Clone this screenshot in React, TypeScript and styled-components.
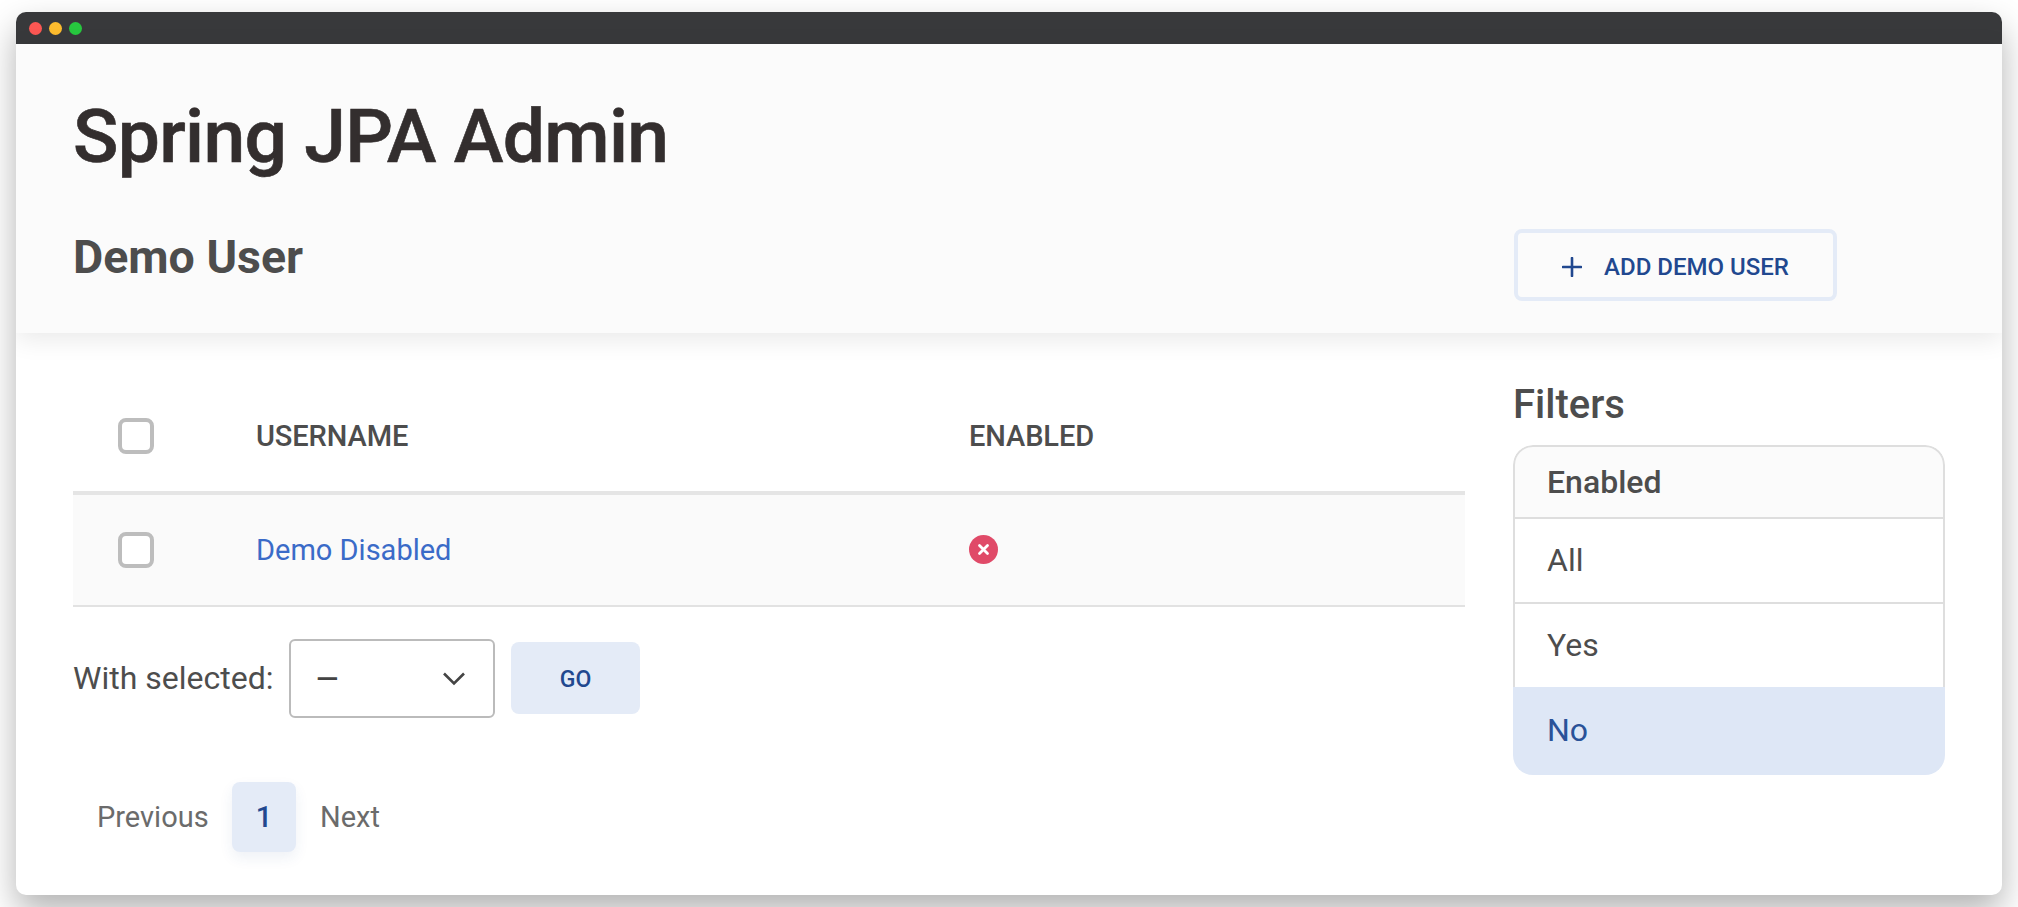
import styled, { createGlobalStyle } from "styled-components";

const GlobalStyle = createGlobalStyle`
  html, body {
    margin: 0;
    padding: 0;
    height: 100%;
    background: #ffffff;
    overflow: hidden;
  }
  * {
    box-sizing: border-box;
  }
`;

const Page = styled.div`
  padding: 12px 16px 0;
  height: 907px;
  font-family: Roboto, "Liberation Sans", sans-serif;
  color: #4d4d4d;
`;

const Window = styled.div`
  height: 883px;
  display: flex;
  flex-direction: column;
  background: #ffffff;
  border-radius: 10px;
  overflow: hidden;
  box-shadow: 0 16px 34px rgba(0, 0, 0, 0.3);
`;

const TitleBar = styled.div`
  flex: none;
  height: 32px;
  padding-left: 13px;
  display: flex;
  align-items: center;
  gap: 7px;
  background: #38393b;
`;

const Dot = styled.span<{ $color: string }>`
  width: 13px;
  height: 13px;
  border-radius: 50%;
  background: ${({ $color }) => $color};
`;

const Header = styled.header`
  flex: none;
  height: 289px;
  padding: 0 57px;
  background: #fbfbfb;
  box-shadow: 0 6px 24px rgba(0, 0, 0, 0.09);
  position: relative;
`;

const Title = styled.h1`
  margin: 0;
  padding-top: 41px;
  font-size: 75px;
  line-height: 102px;
  letter-spacing: -0.7px;
  font-weight: 500;
  -webkit-text-stroke: 0.6px #332e2e;
  color: #332e2e;
`;

const HeaderRow = styled.div`
  display: flex;
  justify-content: space-between;
  align-items: flex-start;
  padding-right: 108px;
  margin-top: 40px;
`;

const Subtitle = styled.h2`
  margin: 0;
  font-size: 46.5px;
  line-height: 60px;
  font-weight: 700;
  color: #4d4d4d;
`;

const AddButton = styled.button`
  width: 323px;
  height: 72px;
  margin-top: 2px;
  display: flex;
  align-items: center;
  justify-content: center;
  gap: 22px;
  padding: 3px 0 0;
  background: transparent;
  border: 4px solid #e4ebf7;
  border-radius: 8px;
  font-family: inherit;
  font-size: 24px;
  font-weight: 500;
  color: #21488f;
`;

const Main = styled.main`
  flex: 1;
  display: flex;
  gap: 49px;
  padding: 0 57px;
`;

const Content = styled.section`
  width: 1392px;
  flex: none;
`;

const TableHead = styled.div`
  height: 162px;
  padding-top: 48px;
  display: grid;
  grid-template-columns: 183px 713px 1fr;
  align-items: center;
  border-bottom: 4px solid #e5e5e5;
  font-size: 29px;
  letter-spacing: -0.1px;
  font-weight: 500;
`;

const TableRow = styled.div`
  height: 112px;
  display: grid;
  grid-template-columns: 183px 713px 1fr;
  align-items: center;
  background: #fafafa;
  border-bottom: 2px solid #e2e2e2;
  font-size: 29px;
`;

const CheckCell = styled.div`
  display: flex;
  padding-left: 45px;
`;

const CheckBox = styled.span`
  width: 36px;
  height: 36px;
  background: #ffffff;
  border: 4px solid #bdbdbd;
  border-radius: 8px;
`;

const UserLink = styled.a`
  color: #3a6bc8;
`;

const StatusIcon = styled.svg`
  margin-top: -2px;
`;

const ActionsRow = styled.div`
  display: flex;
  align-items: center;
  margin-top: 32px;
`;

const ActionsLabel = styled.label`
  width: 216px;
  margin-top: -2px;
  font-size: 32px;
`;

const SelectBox = styled.div`
  width: 206px;
  height: 79px;
  padding: 0 28px 0 25px;
  display: flex;
  align-items: center;
  justify-content: space-between;
  border: 2px solid #bbbbbb;
  border-radius: 6px;
  font-size: 29px;
  font-weight: 500;
  color: #444444;
`;

const GoButton = styled.button`
  width: 129px;
  height: 72px;
  margin: -2px 0 0 16px;
  padding: 4px 0 0;
  border: none;
  border-radius: 8px;
  background: #e4ebf7;
  font-family: inherit;
  font-size: 23px;
  font-weight: 500;
  color: #21488f;
`;

const Pagination = styled.nav`
  display: flex;
  align-items: center;
  margin-top: 64px;
  padding-left: 24px;
  font-size: 29px;
  color: #6b6b6b;
`;

const PageLink = styled.span`
  width: 135px;
`;

const CurrentPage = styled.span`
  width: 64px;
  height: 70px;
  margin-right: 24px;
  display: flex;
  align-items: center;
  justify-content: center;
  border-radius: 8px;
  background: #e4ebf7;
  box-shadow: 0 6px 14px rgba(33, 72, 143, 0.08);
  font-weight: 500;
  color: #21488f;
`;

const Sidebar = styled.aside`
  width: 432px;
  margin-left: -1px;
  flex: none;
`;

const SidebarTitle = styled.h3`
  margin: 0;
  padding-top: 46px;
  height: 112px;
  font-size: 40px;
  line-height: 52px;
  font-weight: 500;
`;

const FilterCard = styled.div`
  border-radius: 20px;
  overflow: hidden;
`;

const FilterHead = styled.div`
  height: 74px;
  padding-left: 32px;
  display: flex;
  align-items: center;
  background: #fbfbfb;
  border: 2px solid #dedede;
  border-radius: 20px 20px 0 0;
  font-size: 32px;
  font-weight: 500;
`;

const FilterItem = styled.div`
  height: 85px;
  padding: 0 0 2px 32px;
  display: flex;
  align-items: center;
  font-size: 32px;
  border: solid #dedede;
  border-width: 0 2px 2px;
  background: #ffffff;
`;

const ActiveFilterItem = styled(FilterItem)`
  height: 88px;
  margin-top: -2px;
  padding: 0 0 2px 34px;
  position: relative;
  border: none;
  background: #dee7f6;
  color: #2a5298;
`;

const App = () => {
  return (
    <>
      <GlobalStyle />
      <Page>
        <Window>
          <TitleBar>
            <Dot $color="#fc5753" />
            <Dot $color="#fdbc2e" />
            <Dot $color="#27c83f" />
          </TitleBar>
          <Header>
            <Title>Spring JPA Admin</Title>
            <HeaderRow>
              <Subtitle>Demo User</Subtitle>
              <AddButton>
                <svg width="20" height="20" viewBox="0 0 20 20" fill="none" stroke="#21488f" strokeWidth="2.6" strokeLinecap="round">
                  <path d="M10 1v18M1 10h18" />
                </svg>
                ADD DEMO USER
              </AddButton>
            </HeaderRow>
          </Header>
          <Main>
            <Content>
              <TableHead>
                <CheckCell>
                  <CheckBox />
                </CheckCell>
                <span>USERNAME</span>
                <span>ENABLED</span>
              </TableHead>
              <TableRow>
                <CheckCell>
                  <CheckBox />
                </CheckCell>
                <UserLink>Demo Disabled</UserLink>
                <StatusIcon width="29" height="29" viewBox="0 0 29 29">
                  <circle cx="14.5" cy="14.5" r="14.5" fill="#e04a68" />
                  <path d="M10.5 10.5l8 8M18.5 10.5l-8 8" stroke="#ffffff" strokeWidth="2.8" strokeLinecap="round" />
                </StatusIcon>
              </TableRow>
              <ActionsRow>
                <ActionsLabel>With selected:</ActionsLabel>
                <SelectBox>
                  —
                  <svg width="22" height="14" viewBox="0 0 22 14" fill="none" stroke="#444444" strokeWidth="2.6">
                    <path d="M1 1.5l10 10 10-10" />
                  </svg>
                </SelectBox>
                <GoButton>GO</GoButton>
              </ActionsRow>
              <Pagination>
                <PageLink>Previous</PageLink>
                <CurrentPage>1</CurrentPage>
                <span>Next</span>
              </Pagination>
            </Content>
            <Sidebar>
              <SidebarTitle>Filters</SidebarTitle>
              <FilterCard>
                <FilterHead>Enabled</FilterHead>
                <FilterItem>All</FilterItem>
                <FilterItem>Yes</FilterItem>
                <ActiveFilterItem>No</ActiveFilterItem>
              </FilterCard>
            </Sidebar>
          </Main>
        </Window>
      </Page>
    </>
  );
};

export default App;
